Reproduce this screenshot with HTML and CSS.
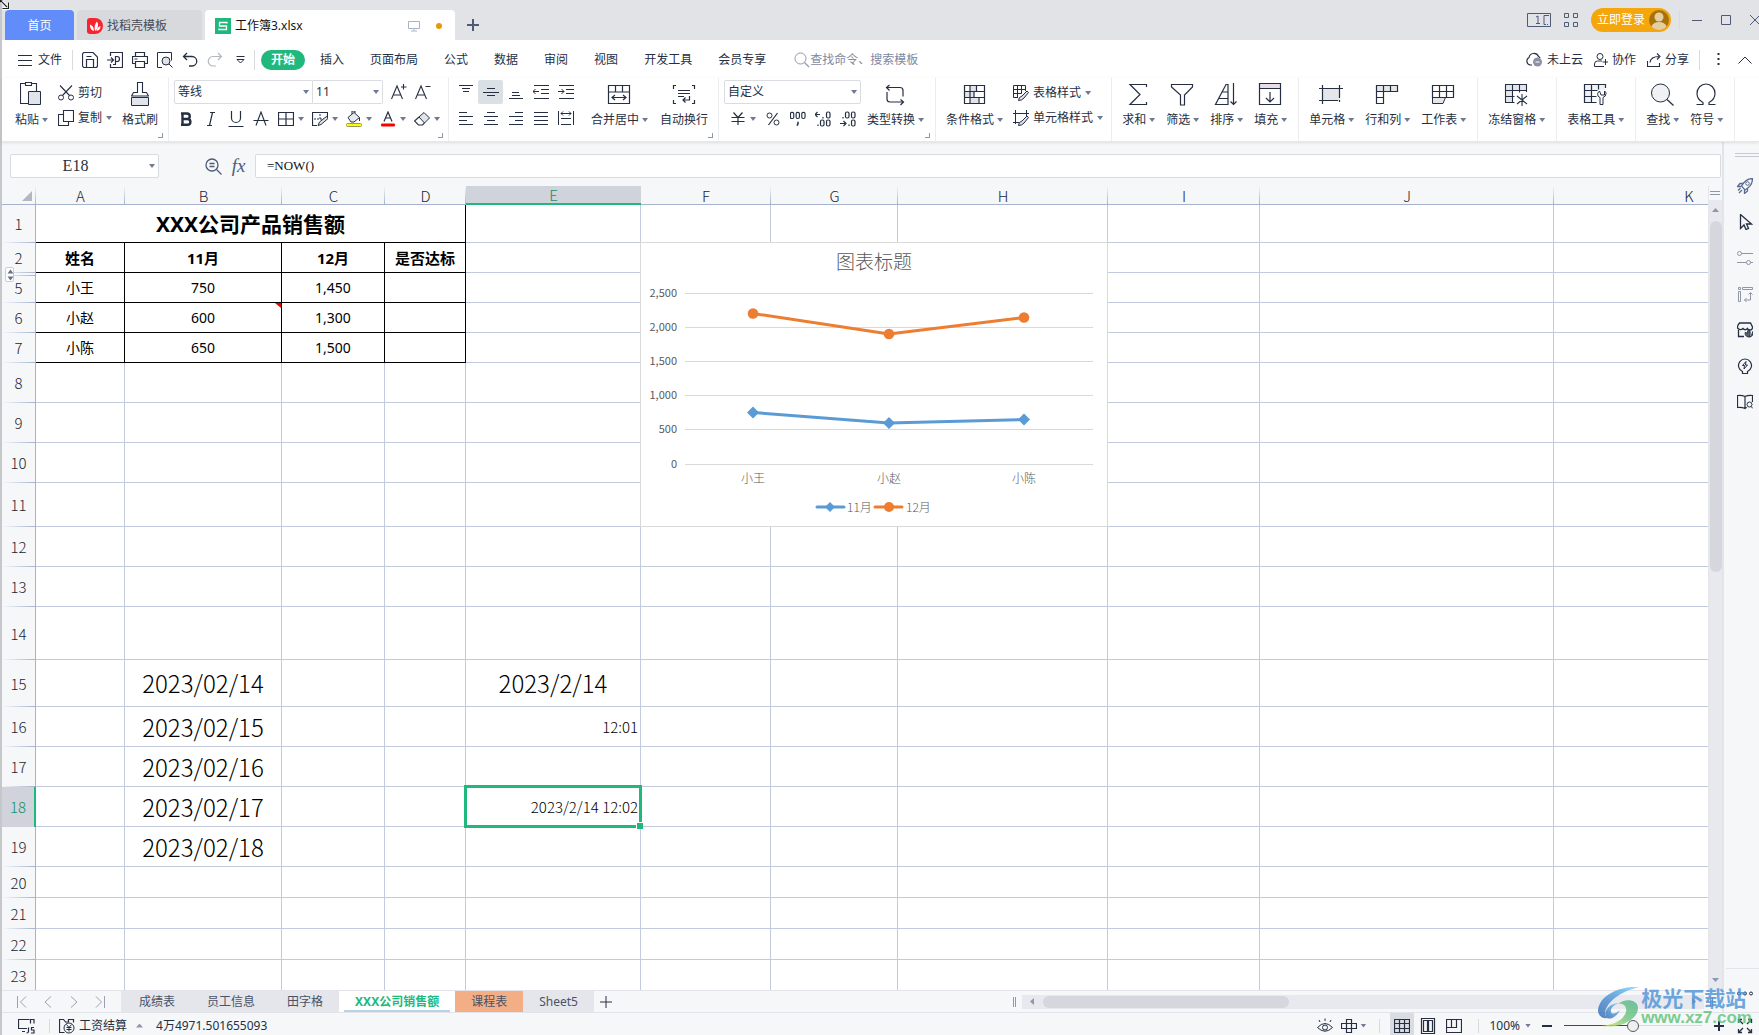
FILE: index.html
```html
<!DOCTYPE html>
<html lang="zh-CN">
<head>
<meta charset="utf-8">
<title>工作簿3.xlsx</title>
<link rel="stylesheet" href="styles.css">
</head>
<body>
<svg class="sprite" aria-hidden="true">
  <symbol id="save" viewBox="0 0 16 16"><path d="M.5 2.500a2 2 0 0 1 2-2H11l4.500 4.500v8.500a2 2 0 0 1-2 2h-11a2 2 0 0 1-2-2zM4.500 15V7.500H11.500V15M4.500 4.500H9.500" stroke-width="1.200"/></symbol>
  <symbol id="export" viewBox="0 0 16 16"><path d="M3.500 4V.5h12v15h-12V12M0 8h6M4 5.500 6.500 8 4 10.500M8.500 12.500V4.500h1.500a2.500 2.500 0 0 1 0 5H8.500M6 12.500h3" stroke-width="1.200"/></symbol>
  <symbol id="print" viewBox="0 0 16 16"><path d="M3.500 4.500V.5h9v4M3.500 11.500h-3v-7h15v7h-3M3.500 9.500h9v6h-9zM2.500 7h3" stroke-width="1.200"/></symbol>
  <symbol id="preview" viewBox="0 0 16 16"><path d="M5 15.500H.5V.5h14v8"/><circle cx="9" cy="9" r="4" fill="#dfe2e8"/><path d="m12 12 3.500 3.500"/></symbol>
  <symbol id="undo" viewBox="0 0 16 16"><path d="M5 1 1.500 4.500 5 8M2 4.500h8a4.500 4.500 0 0 1 0 9.500H7" stroke-width="1.300"/></symbol>
  <symbol id="redo" viewBox="0 0 16 16"><path d="M11 1l3.500 3.500L11 8M14 4.500H6A4.500 4.500 0 0 0 6 14h3" stroke-width="1.200"/></symbol>
  <symbol id="more" viewBox="0 0 9 9"><path d="M.5 1.500h8M1 4.500h7L4.500 8z"/></symbol>
  <symbol id="burger" viewBox="0 0 14 12"><path d="M0 1.500h14M0 6.500h14M0 11.500h14"/></symbol>
  <symbol id="search" viewBox="0 0 16 16"><circle cx="6.500" cy="6.500" r="5.500"/><path d="m10.500 10.500 4.500 4.500" stroke-width="1.300"/></symbol>
  <symbol id="monitor" viewBox="0 0 12 12"><path d="M.5 1.500h11v7H.5zM6 8.500v2M3 11h6"/></symbol>
  <symbol id="cloud" viewBox="0 0 17 15"><path d="M6 13H4.500A4 4 0 0 1 3 5.500 5 5 0 0 1 12.500 4.500 3 3 0 0 1 14 6" stroke-width="1.200"/><circle cx="11.500" cy="10" r="4.500" fill="#8a92a3" stroke="none"/><path d="M9.500 10h4" stroke="#fff"/></symbol>
  <symbol id="team" viewBox="0 0 14 14"><circle cx="6" cy="3.500" r="3"/><path d="M10 13.500H.5V11a3 3 0 0 1 3-3H8M11.500 6v6M8.500 9h6"/></symbol>
  <symbol id="share" viewBox="0 0 14 14"><path d="M.5 8v5.500h12V10M3 9.500C3.500 5.500 6 3.500 12 3.500M10 .5l3 3-3 3" stroke-width="1.100"/></symbol>
  <symbol id="dots" viewBox="0 0 3 14"><path d="M1.500 0v2M1.500 5v2M1.500 10v2" stroke-width="2"/></symbol>
  <symbol id="chev" viewBox="0 0 14 8"><path d="m.5 7.500 6.500-6.500 6.500 6.500"/></symbol>

  <symbol id="paste" viewBox="0 0 22 24"><path d="M8 21.500H.5v-20h5M12 1.500h4.500V9M5.500.5h6v3h-6z" stroke-width="1.100"/><path d="M8.500 9.500h12v13h-12z" fill="#e1e4ea"/></symbol>
  <symbol id="cut" viewBox="0 0 16 16"><circle cx="3" cy="12.500" r="2.500"/><circle cx="13" cy="12.500" r="2.500"/><path d="M2 .5 11.500 10.500M14 .5 4.500 10.500" stroke-width="1.100"/></symbol>
  <symbol id="copy" viewBox="0 0 16 16"><path d="M5.500.5h10v11h-10zM5.500 4.500H.5v11h10v-4" stroke-width="1.100"/></symbol>
  <symbol id="brush" viewBox="0 0 18 24"><path d="M6.500 10.500V.5h5v10h4l2 3.500H.5L2.500 10.500z" stroke-width="1.100"/><path d="M.5 15.500h17v8H.5z" fill="#e1e4ea"/></symbol>
  <symbol id="bold" viewBox="0 0 16 16"><path d="M3 2.500h6a2.700 2.700 0 0 1 0 5.500H4.500M4.500 8h5a2.900 2.900 0 0 1 0 5.800H3M4.500 2.500v11" stroke-width="2.400"/></symbol>
  <symbol id="italic" viewBox="0 0 16 16"><path d="M7 1.500h5M4 14.500h5M9.500 1.500l-3 13" stroke-width="1.200"/></symbol>
  <symbol id="under" viewBox="0 0 16 16"><path d="M3.500 0v7a4.500 4.500 0 0 0 9 0V0M.5 15.500h15" stroke-width="1.200"/></symbol>
  <symbol id="strike" viewBox="0 0 16 16"><path d="M3 14.500 8 1l5 13.500M.5 9.500h15" stroke-width="1.100"/></symbol>
  <symbol id="borders" viewBox="0 0 16 16"><path d="M.5 1.500h15v13H.5zM8 1.500v13M.5 8h15" stroke-width="1.200"/></symbol>
  <symbol id="cellfill" viewBox="0 0 16 16"><path d="M15.500 7V1.500H.5v13H5" stroke-width="1.200"/><path d="M8 3v6M2 8h10" stroke-dasharray="2 1"/><path d="M6 14.500 7.500 11l7-5.500 1.500 2-7 6z" fill="#e1e4ea"/></symbol>
  <symbol id="bucket" viewBox="0 0 16 16"><path d="M2 6.500 8 1.500l5.500 5L8 11H5z" fill="#e9ebef"/><path d="M6 3V0h3v2M13.500 6.500V10" /><rect x=".5" y="12.500" width="15" height="3" rx="1" fill="#ff0" stroke="#9a9a55"/></symbol>
  <symbol id="fontcolor" viewBox="0 0 16 16"><path d="M4 10.500 8 1l4 9.500M5.500 7h5" stroke-width="1.200"/><rect x="1" y="12.500" width="14" height="3" rx="1" fill="#f00" stroke="none"/></symbol>
  <symbol id="eraser" viewBox="0 0 16 16"><path d="m5 6 5-4.500 5.500 5.500-5 5z" fill="#e1e4ea"/><path d="M5 6 .5 10 4.500 14h4l2-2" stroke-width="1.100"/></symbol>
  <symbol id="aplus" viewBox="0 0 16 16"><path d="M.5 15 6 2l5.500 13M2.500 11h7M10 3h5.500M12.500 0v5.500" stroke-width="1.100"/></symbol>
  <symbol id="aminus" viewBox="0 0 16 16"><path d="M.5 15 6 2l5.500 13M2.500 11h7M10.500 2.500h5" stroke-width="1.100"/></symbol>

  <symbol id="vtop" viewBox="0 0 16 16"><path d="M1 1.500h14M4 4.500h8M5 7.500h6"/></symbol>
  <symbol id="vmid" viewBox="0 0 16 16"><path d="M4 4.500h8M0 8.500h16M4 11.500h8"/></symbol>
  <symbol id="vbot" viewBox="0 0 16 16"><path d="M4 8.500h7M4 11.500h8M1 14.500h14"/></symbol>
  <symbol id="outdent" viewBox="0 0 16 16"><path d="M1 1.500h15M8 5.500h8M8 9.500h8M1 14.500h15M0 7.500h6M2.500 5 0 7.500 2.500 10"/></symbol>
  <symbol id="indent" viewBox="0 0 16 16"><path d="M1 1.500h15M8 5.500h8M8 9.500h8M1 14.500h15M0 7.500h6M3.500 5 6 7.500 3.500 10"/></symbol>
  <symbol id="left" viewBox="0 0 16 16"><path d="M1 2.500h8M1 6.500h14M1 10.500h8M1 14.500h14"/></symbol>
  <symbol id="center" viewBox="0 0 16 16"><path d="M4 2.500h8M1 6.500h14M4 10.500h8M1 14.500h14"/></symbol>
  <symbol id="right" viewBox="0 0 16 16"><path d="M7 2.500h8M1 6.500h14M7 10.500h8M1 14.500h14"/></symbol>
  <symbol id="justify" viewBox="0 0 16 16"><path d="M1 2.500h14M1 6.500h14M1 10.500h14M1 14.500h14"/></symbol>
  <symbol id="distribute" viewBox="0 0 16 16"><path d="M.5 1v14M15.500 1v14M3 3.500h10M5 1.500l-2 2 2 2M11 1.500l2 2-2 2M3 8.500h10M3 14.500h10"/></symbol>
  <symbol id="merge" viewBox="0 0 24 24"><path d="M1.500 2.500h21v18h-21zM1.500 9h21M8.500 2.500V9M15.500 2.500V9M5 14.500h14M8 12l-3 2.500L8 17M16 12l3 2.500L16 17" stroke-width="1.200"/></symbol>
  <symbol id="wrap" viewBox="0 0 24 24"><path d="M4 2.500H1.500V6M20 2.500h2.500V6M1.500 17v3.500H4M22.500 17v3.500H20M6 7.500h12M6 10.500h12M6 13.500h6M17.500 13v4H11M13.500 14.500 11 17l2.500 2.500" stroke-width="1.200"/></symbol>
  <symbol id="yen" viewBox="0 0 16 16"><path d="M3.500 1.500 8 6.500l4.500-5M8 6.500V14M1.500 6.500h13M1.500 10.500h13" stroke-width="1.200"/></symbol>
  <symbol id="percent" viewBox="0 0 16 16"><circle cx="4.500" cy="4.500" r="2.500"/><circle cx="11.500" cy="11.500" r="2.500"/><path d="M12.500 2 3.500 14" stroke-width="1.200"/></symbol>
  <symbol id="thousand" viewBox="0 0 17 16"><g stroke-width="1.200"><rect x=".5" y="1" width="3.500" height="6.500" rx="1.500"/><rect x="6.500" y="1" width="3.500" height="6.500" rx="1.500"/><rect x="12.500" y="1" width="3.500" height="6.500" rx="1.500"/></g><path d="M8.500 11v2l-1 2" stroke-width="1.600"/></symbol>
  <symbol id="decinc" viewBox="0 0 16 16"><g stroke-width="1.200"><path d="M0 3.500h5M2.500 1 0 3.500 2.500 6M8 6v1.500M3 13.500V15"/><rect x="11.500" y="1" width="3.500" height="6" rx="1.500"/><rect x="5.500" y="9" width="3.500" height="6" rx="1.500"/><rect x="11.500" y="9" width="3.500" height="6" rx="1.500"/></g></symbol>
  <symbol id="decdec" viewBox="0 0 16 16"><g stroke-width="1.200"><path d="M0 12.500h6M3.500 10 6 12.500 3.500 15M3 6v1.500M9 13.500V15"/><rect x="5.500" y="1" width="3.500" height="6" rx="1.500"/><rect x="11.500" y="1" width="3.500" height="6" rx="1.500"/><rect x="11.500" y="9" width="3.500" height="6" rx="1.500"/></g></symbol>
  <symbol id="convert" viewBox="0 0 24 24"><path d="M6.500 2 3.500 4.500l3 3M3.500 4.500H17q3 0 3 3v6M4 9v7q0 3 3 3h13.500M17.500 16.500l3 2.500-3 3" stroke-width="1.200"/></symbol>

  <symbol id="cond" viewBox="0 0 24 24"><path d="M8 2.500h6v6H8zM2 8.500h10v6H2zM8 14.500h8v6H8z" fill="#e1e4ea" stroke="none"/><path d="M2.500 2.500h20v18h-20zM2.500 8.500h20M2.500 14.500h20M8 2.500v18M14.500 2.500v6M12 8.500v6M17 14.500v6" stroke-width="1.200"/></symbol>
  <symbol id="tstyle" viewBox="0 0 16 16"><path d="M5 12.500H.5V.5h12V6M.5 4.500h12M.5 8.500h8M4.500.5v12M8.500.5v8"/><path d="M5.500 15.500q0-3.500 3.500-4.500L14 6l1.500 1.500-4.500 5.500q-2 2.500-5.500 2.500z" fill="#dfe2e8"/></symbol>
  <symbol id="cstyle" viewBox="0 0 16 16"><path d="M0 3.500h16M2.500 0v14M0 12.500h6M13.500 0v6"/><path d="M5.500 15.500q0-3.500 3.500-4.500L14 6l1.500 1.500-4.500 5.500q-2 2.500-5.500 2.500z" fill="#dfe2e8"/></symbol>
  <symbol id="sum" viewBox="0 0 24 24"><path d="M20.500 4V1.500H4L14 11.500 4 21.500h16.500V19" stroke-width="1.200"/></symbol>
  <symbol id="filter" viewBox="0 0 24 24"><path d="M1.500 1.500h21V4L14.500 12v10h-4V12L1.500 4z" stroke-width="1.200"/></symbol>
  <symbol id="sort" viewBox="0 0 24 24"><path d="M14 21.500V1.500h-2L1.500 21.500zM8 9h6M5 15.500h9M19.500 0v21.500M16.500 18.500l3 3 3-3" stroke-width="1.200"/></symbol>
  <symbol id="fill" viewBox="0 0 24 24"><path d="M2 1h20v5H2z" fill="#e6e0e6" stroke="none"/><path d="M1.500.5h21v21h-21zM1.500 5.500h21M12 9v10M8 15l4 4 4-4" stroke-width="1.200"/></symbol>
  <symbol id="cells" viewBox="0 0 24 24"><path d="M4 5.500h17v12H4z" fill="#e4e6ea" stroke="none"/><path d="M0 5.500h24M0 17.500h19M3.500 2v19M20.500 2v13M20.500 17v2" stroke-width="1.200"/></symbol>
  <symbol id="rowcol" viewBox="0 0 24 24"><path d="M1.500 2.500h21v6h-21z" fill="#e4e6ea"/><path d="M1.500 2.500h21v6h-14v12h-7zM8.500 2.500v6M15.500 2.500v6M1.500 8.500v6h7" stroke-width="1.200"/></symbol>
  <symbol id="sheet" viewBox="0 0 24 24"><path d="M1.500 14.500v6H12l2.500-6" fill="#e4e6ea"/><path d="M1.500 2.500h21v12h-21zM1.500 8.500h21M8.500 2.500v12M15.500 2.500v12" stroke-width="1.200"/></symbol>
  <symbol id="freeze" viewBox="0 0 24 24"><path d="M1.500 1.500h21v6h-14v12h-7z" fill="#e4e6ea"/><path d="M22.500 9V1.500h-21v18h9M1.500 7.500h21M1.500 13.500h9M8.500 1.500v18M15.500 1.500v8M18 11v12M13 13l10 8M23 13l-10 8" stroke-width="1.100"/></symbol>
  <symbol id="tools" viewBox="0 0 24 24"><path d="M1.500 1.500h21v6h-14v12h-7z" fill="#f0f1f4" stroke="none"/><path d="M22.500 5V1.500h-21v18h12M1.500 7.500h13M1.500 13.500h12M8.500 1.500v18M15.500 1.500v5" stroke-width="1.200"/><path d="M16.500 8q-3 2-1.500 5 1 1 2 1.500v7h3v-7q3-1 3-4 0-1.500-1.500-2.500v4h-3.500z" fill="#fff"/></symbol>
  <symbol id="find" viewBox="0 0 24 24"><circle cx="10.500" cy="10" r="9" fill="#f0f1f3"/><path d="m17 16.500 6.500 6" stroke-width="1.300"/></symbol>
  <symbol id="omega" viewBox="0 0 24 24"><path d="M2.500 21.500H9v-2C5 17.500 3 14.500 3 10.500a9 9.500 0 0 1 18 0c0 4-2 7-6 9v2h6.500" stroke-width="1.200"/></symbol>

  <symbol id="zoomout" viewBox="0 0 17 17"><circle cx="7" cy="7" r="6" stroke-width="1.300"/><path d="M4.500 5.500h5M4.500 8.500h5M11.500 11.500l5 5" stroke-width="1.300"/></symbol>
  <symbol id="rocket" viewBox="0 0 16 16"><path d="M4.500 8Q8 1 15.500.5 15.500 8 8 12L4.500 8zM5.500 5.500H3L.5 8.500h3.500M10.500 10v3l-3 2.500V12M3.500 10 1 12.500M5 12l-3 3" stroke-width="1.300"/><circle cx="10.500" cy="5.500" r="1.800"/></symbol>
  <symbol id="cursor" viewBox="0 0 16 16"><path d="M3.500.5v14L7 11l2 4.500 2.500-1L9.500 10h5z" stroke-width="1.300"/></symbol>
  <symbol id="sliders" viewBox="0 0 16 16"><circle cx="2.500" cy="3.500" r="2"/><path d="M4.500 3.500H16M0 12.500h9.500M13.500 12.500H16"/><circle cx="11.500" cy="12.500" r="2"/></symbol>
  <symbol id="resize" viewBox="0 0 16 16"><path d="M1.500 1.500h2v2h-2zM5.500 1.500h10v2h-10zM1.500 5.500h2v10h-2zM13.500 7v7h-6M11.500 8.500l2-2 2 2M9.500 12l-2 2 2 2"/></symbol>
  <symbol id="store" viewBox="0 0 16 16"><path d="M2.500 1h11l2 4q0 3-2.500 3-2 0-2.500-1.500Q8 9 6 6.500 3 9 .5 6q0-3 2-5zM1.500 8v6.500H7" stroke-width="1.300"/><path d="M11.500 7c3 3 1 5 1 8-4 0-5-3-4-5l1.500 1.500zM15.500 9.500c1 3-.5 5.500-3 5.500" fill="#5a6273" /></symbol>
  <symbol id="bulb" viewBox="0 0 16 16"><path d="M5.500 13.500A6.500 6.500 0 1 1 10.500 13.500v2h-5z" stroke-width="1.200"/><path d="M9 3.500 5.500 7.500h2L7 11l3.500-4h-2z"/></symbol>
  <symbol id="book" viewBox="0 0 16 16"><path d="M8 2.500Q5 1 .5 1.500v12q4.500-.5 7.500 1 1-.8 2-1M8 2.500v12M8 2.500Q11 1 15.500 1.500V8" stroke-width="1.200"/><circle cx="12.500" cy="10.500" r="2.500"/><path d="m14 12.500 2 2"/></symbol>

  <symbol id="first" viewBox="0 0 10 12"><path d="M.5 0v12M9 .5 3.500 6 9 11.500"/></symbol>
  <symbol id="prev" viewBox="0 0 10 12"><path d="M8 .5 2 6l6 5.500"/></symbol>
  <symbol id="next" viewBox="0 0 10 12"><path d="m2 .5 6 5.500-6 5.500"/></symbol>
  <symbol id="last" viewBox="0 0 10 12"><path d="M9.500 0v12M1 .5 6.500 6 1 11.500"/></symbol>
  <symbol id="plus" viewBox="0 0 12 12"><path d="M6 0v12M0 6h12"/></symbol>
  <symbol id="macro" viewBox="0 0 17 16"><path d="M9 10.500H.5v-9h11M4 13.500h3M10.500 9.500v4q0 1.500-2 1.500M16 9.500h-2.500v2.500H16v3h-3M12.500 1v4.500M12.500 1.500h3.500v4" stroke-width="1.200"/></symbol>
  <symbol id="payroll" viewBox="0 0 16 16"><path d="M5.500 14.500H.5V1.500h4l2 2.500h3V1.500h5v3" stroke-width="1.200"/><circle cx="10" cy="10" r="5"/><path d="m7.500 6.500 2.500 3 2.500-3M10 9.500v4M7.500 9.500h5M7.500 11.500h5"/></symbol>
  <symbol id="eye" viewBox="0 0 16 16"><path d="M.5 9.500Q8 1.500 15.500 9.500 8 17 .5 9.500zM8 3V.5M3 4 2 2M13 4l1-2"/><circle cx="8" cy="9.500" r="2.500"/></symbol>
  <symbol id="cross" viewBox="0 0 16 16"><path d="M5.500 1.500h5v13h-5zM.5 5.500h15v5H.5z" stroke-width="1.200"/></symbol>
  <symbol id="vgrid" viewBox="0 0 16 16"><path d="M.5 1.500h15v13H.5zM.5 5.500h15M.5 10.500h15M5.500 1.500v13M10.500 1.500v13" stroke-width="1.200"/></symbol>
  <symbol id="vpage" viewBox="0 0 16 16"><path d="M1.500.5h13v15h-13zM3.500 2.500h4v11h-4zM8.500 2.500h4v11h-4z" stroke-width="1.200"/></symbol>
  <symbol id="vbreak" viewBox="0 0 16 16"><path d="M.5 1.500h15v13H.5zM.5 9.500h10V1.500M5.500 1.500v8" stroke-width="1.200"/></symbol>
  <symbol id="full" viewBox="0 0 16 16"><path d="M1.500 5V1.500H5M2 2l4 4M11 1.500h3.500V5M14 2l-4 4M1.500 11v3.500H5M2 14l4-4M14.500 11v3.500H11M14 14l-4-4" stroke-width="1.300"/></symbol>
</svg>

<header class="titlebar">
  <nav class="doctabs">
    <button class="doctab home">首页</button>
    <button class="doctab templates">
      <svg class="i16" viewBox="0 0 16 16"><path d="M3 0h5a8 8 0 0 1 0 16H3a3 3 0 0 1-3-3V3a3 3 0 0 1 3-3z" fill="#f5242f"/><path d="M7 13C3.500 12 3 9 3 6.500c2.500 1 4 3 4 6.500zM8 13c-1-4 0-7.500 2-9.500 2 3 1 7.500-2 9.500zM9.500 13c.5-2.500 1.500-4 4-5 0 2.500-1 4.500-4 5z" fill="#fff"/></svg>
      找稻壳模板</button>
    <button class="doctab current">
      <svg class="i16" viewBox="0 0 16 16"><rect width="16" height="16" fill="#1fb77c"/><path d="M12 5.500v-1H4.500v3.500h7v3.500H4v-1" fill="none" stroke="#fff" stroke-width="1.300"/></svg>
      <span class="grow">工作簿3.xlsx</span>
      <svg class="ico i12 pale"><use href="#monitor"/></svg><i class="unsaved"></i></button>
    <button class="newtab" aria-label="新建"><svg class="ico i12 heavy"><use href="#plus"/></svg></button>
  </nav>
  <div class="winctl">
    <button aria-label="窗口"><svg class="ico slate" width="24" height="14" viewBox="0 0 24 14"><path d="M.5.5h23v13H.5zM9 4l2-1v7M9 10.500h4M22 2.500h-5v9h2M20 11.500h1"/></svg></button>
    <button aria-label="应用"><svg class="ico slate" width="14" height="14" viewBox="0 0 14 14"><path d="M.5.5h4v4h-4zM9.500.5h4v4h-4zM.5 9.500h4v4h-4zM9.500 9.500h4v4h-4z"/></svg></button>
    <button class="login">立即登录<svg width="20" height="20" viewBox="0 0 20 20"><circle cx="10" cy="10" r="10" fill="#a87208"/><circle cx="10" cy="7" r="4.500" fill="#e3cfa3"/><path d="M2.500 16.500Q4 12 10 12t7.500 4.500A10 10 0 0 1 2.500 16.500z" fill="#e3cfa3"/></svg></button>
    <i class="rule"></i>
    <button aria-label="最小化"><svg class="ico slate" width="10" height="10" viewBox="0 0 10 10"><path d="M0 5.500h10"/></svg></button>
    <button aria-label="最大化"><svg class="ico slate" width="10" height="10" viewBox="0 0 10 10"><path d="M.5.500h9v9h-9z"/></svg></button>
    <button aria-label="关闭"><svg class="ico slate" width="10" height="10" viewBox="0 0 10 10"><path d="m0 0 10 10M10 0 0 10"/></svg></button>
  </div>
</header>

<div class="menubar">
  <button class="file"><svg class="ico" width="14" height="12"><use href="#burger"/></svg>文件</button>
  <i class="rule"></i>
  <div class="quick">
    <button aria-label="保存"><svg class="ico i16"><use href="#save"/></svg></button>
    <button aria-label="输出"><svg class="ico i16"><use href="#export"/></svg></button>
    <button aria-label="打印"><svg class="ico i16"><use href="#print"/></svg></button>
    <button aria-label="打印预览"><svg class="ico i16"><use href="#preview"/></svg></button>
    <button aria-label="撤销"><svg class="ico i16"><use href="#undo"/></svg></button>
    <button aria-label="恢复"><svg class="ico i16 off"><use href="#redo"/></svg></button>
    <button aria-label="更多"><svg class="ico" width="9" height="9"><use href="#more"/></svg></button>
  </div>
  <i class="rule"></i>
  <nav class="menus">
    <button class="on">开始</button><button>插入</button><button>页面布局</button><button>公式</button><button>数据</button><button>审阅</button><button>视图</button><button>开发工具</button><button>会员专享</button>
  </nav>
  <label class="cmd"><svg class="ico i16"><use href="#search"/></svg><input type="text" placeholder="查找命令、搜索模板" aria-label="查找命令"></label>
  <div class="cloudbar">
    <button><svg class="ico" width="17" height="15"><use href="#cloud"/></svg>未上云</button>
    <button><svg class="ico i14"><use href="#team"/></svg>协作</button>
    <button><svg class="ico i14"><use href="#share"/></svg>分享</button>
    <i class="rule"></i>
    <button class="slim" aria-label="更多"><svg class="ico" width="3" height="14"><use href="#dots"/></svg></button>
    <button class="slim" aria-label="收起功能区"><svg class="ico" width="14" height="8"><use href="#chev"/></svg></button>
  </div>
</div>

<div class="ribbon">
  <section class="group clip">
    <button class="big"><svg class="ico" width="22" height="24"><use href="#paste"/></svg><span class="dd">粘贴</span></button>
    <div class="stack">
      <button><svg class="ico i16"><use href="#cut"/></svg><span>剪切</span></button>
      <button><svg class="ico i16"><use href="#copy"/></svg><span class="dd wide">复制</span></button>
    </div>
    <button class="big"><svg class="ico" width="18" height="24"><use href="#brush"/></svg><span>格式刷</span></button>
    <i class="launch"></i>
  </section>
  <section class="group font">
    <div class="stack">
      <div class="line">
        <label class="pick name"><select aria-label="字体"><option>等线</option></select></label><label class="pick size"><select aria-label="字号"><option>11</option></select></label>
        <button class="grown" aria-label="增大字号"><svg class="ico i16"><use href="#aplus"/></svg></button>
        <button aria-label="减小字号"><svg class="ico i16"><use href="#aminus"/></svg></button>
      </div>
      <div class="line tools">
        <button aria-label="加粗"><svg class="ico i16"><use href="#bold"/></svg></button>
        <button aria-label="倾斜"><svg class="ico i16"><use href="#italic"/></svg></button>
        <button aria-label="下划线"><svg class="ico i16"><use href="#under"/></svg></button>
        <button aria-label="删除线"><svg class="ico i16"><use href="#strike"/></svg></button>
        <button class="dd" aria-label="边框"><svg class="ico i16"><use href="#borders"/></svg></button>
        <button class="dd" aria-label="单元格样式"><svg class="ico i16"><use href="#cellfill"/></svg></button>
        <button class="dd" aria-label="填充颜色"><svg class="ico i16"><use href="#bucket"/></svg></button>
        <button class="dd" aria-label="字体颜色"><svg class="ico i16"><use href="#fontcolor"/></svg></button>
        <button class="dd" aria-label="清除"><svg class="ico i16"><use href="#eraser"/></svg></button>
      </div>
    </div>
    <i class="launch"></i>
  </section>
  <section class="group align">
    <div class="alignset">
      <button aria-label="顶端对齐"><svg class="ico i16"><use href="#vtop"/></svg></button>
      <button class="on" aria-label="垂直居中"><svg class="ico i16"><use href="#vmid"/></svg></button>
      <button aria-label="底端对齐"><svg class="ico i16"><use href="#vbot"/></svg></button>
      <button aria-label="减少缩进"><svg class="ico i16"><use href="#outdent"/></svg></button>
      <button aria-label="增加缩进"><svg class="ico i16"><use href="#indent"/></svg></button>
      <button aria-label="左对齐"><svg class="ico i16"><use href="#left"/></svg></button>
      <button aria-label="水平居中"><svg class="ico i16"><use href="#center"/></svg></button>
      <button aria-label="右对齐"><svg class="ico i16"><use href="#right"/></svg></button>
      <button aria-label="两端对齐"><svg class="ico i16"><use href="#justify"/></svg></button>
      <button aria-label="分散对齐"><svg class="ico i16"><use href="#distribute"/></svg></button>
    </div>
    <button class="big"><svg class="ico i24"><use href="#merge"/></svg><span class="dd">合并居中</span></button>
    <button class="big"><svg class="ico i24"><use href="#wrap"/></svg><span>自动换行</span></button>
    <i class="launch"></i>
  </section>
  <section class="group number">
    <div class="stack">
      <label class="pick format"><select aria-label="数字格式"><option>自定义</option></select></label>
      <div class="line numtools">
        <button class="dd" aria-label="货币"><svg class="ico i16"><use href="#yen"/></svg></button>
        <button aria-label="百分比"><svg class="ico i16"><use href="#percent"/></svg></button>
        <button aria-label="千位分隔"><svg class="ico i16"><use href="#thousand"/></svg></button>
        <button aria-label="增加小数位"><svg class="ico i16"><use href="#decinc"/></svg></button>
        <button aria-label="减少小数位"><svg class="ico i16"><use href="#decdec"/></svg></button>
      </div>
    </div>
    <button class="big"><svg class="ico i24"><use href="#convert"/></svg><span class="dd">类型转换</span></button>
    <i class="launch"></i>
  </section>
  <section class="group styles">
    <button class="big"><svg class="ico i24"><use href="#cond"/></svg><span class="dd">条件格式</span></button>
    <div class="stack">
      <button><svg class="ico i16"><use href="#tstyle"/></svg><span class="dd wide">表格样式</span></button>
      <button><svg class="ico i16"><use href="#cstyle"/></svg><span class="dd wide">单元格样式</span></button>
    </div>
  </section>
  <section class="group">
    <button class="big"><svg class="ico i24"><use href="#sum"/></svg><span class="dd">求和</span></button>
    <button class="big"><svg class="ico i24"><use href="#filter"/></svg><span class="dd">筛选</span></button>
    <button class="big"><svg class="ico i24"><use href="#sort"/></svg><span class="dd">排序</span></button>
    <button class="big"><svg class="ico i24"><use href="#fill"/></svg><span class="dd">填充</span></button>
  </section>
  <section class="group">
    <button class="big"><svg class="ico i24"><use href="#cells"/></svg><span class="dd">单元格</span></button>
    <button class="big"><svg class="ico i24"><use href="#rowcol"/></svg><span class="dd">行和列</span></button>
    <button class="big"><svg class="ico i24"><use href="#sheet"/></svg><span class="dd">工作表</span></button>
  </section>
  <section class="group"><button class="big"><svg class="ico i24"><use href="#freeze"/></svg><span class="dd">冻结窗格</span></button></section>
  <section class="group"><button class="big"><svg class="ico i24"><use href="#tools"/></svg><span class="dd">表格工具</span></button></section>
  <section class="group">
    <button class="big"><svg class="ico i24"><use href="#find"/></svg><span class="dd">查找</span></button>
    <button class="big"><svg class="ico i24"><use href="#omega"/></svg><span class="dd">符号</span></button>
  </section>
</div>

<div class="body">
  <main class="work">
    <div class="formula">
      <label class="pick cellref"><input type="text" value="E18" aria-label="名称框"></label>
      <button class="lens" aria-label="缩小"><svg class="ico slate" width="17" height="17"><use href="#zoomout"/></svg></button>
      <button class="fx" aria-label="插入函数">fx</button>
      <input class="entry" type="text" value="=NOW()" aria-label="编辑栏">
    </div>
    <div class="sheetarea">
      <div class="grid">
        <table>
          <colgroup><col class="c0"><col class="ca"><col class="cb"><col class="cc"><col class="cd"><col class="ce"><col class="cf"><col class="cg"><col class="ch"><col class="ci"><col class="cj"><col class="ck"></colgroup>
          <thead><tr><th class="corner"><th>A<th>B<th>C<th>D<th class="sel">E<th>F<th>G<th>H<th>I<th>J<th>K</thead>
          <tbody>
          <tr class="r1"><th>1<td class="title k" colspan="4">XXX公司产品销售额<td><td><td><td><td><td><td>
          <tr class="r2 bold"><th>2<i class="hidden-rows"><svg width="9" height="14" viewBox="0 0 9 14"><path d="M1.500 5.500h6l-3-4zM1.500 8.500h6l-3 4z" fill="#66708a"/></svg></i><td class="k">姓名<td class="k">11月<td class="k">12月<td class="k">是否达标<td><td><td><td><td><td><td>
          <tr class="r2 after"><th>5<td class="k">小王<td class="k">750<td class="k">1,450<td class="k"><td><td><td><td><td><td><td>
          <tr class="r2"><th>6<td class="k">小赵<td class="k note">600<td class="k">1,300<td class="k"><td><td><td><td><td><td><td>
          <tr class="r2"><th>7<td class="k">小陈<td class="k">650<td class="k">1,500<td class="k"><td><td><td><td><td><td><td>
          <tr class="r8"><th>8<td><td><td><td><td><td><td><td><td><td><td>
          <tr class="r8"><th>9<td><td><td><td><td><td><td><td><td><td><td>
          <tr class="r8"><th>10<td><td><td><td><td><td><td><td><td><td><td>
          <tr class="r11"><th>11<td><td><td><td><td><td><td><td><td><td><td>
          <tr class="r8"><th>12<td><td><td><td><td><td><td><td><td><td><td>
          <tr class="r8"><th>13<td><td><td><td><td><td><td><td><td><td><td>
          <tr class="r14"><th>14<td><td><td><td><td><td><td><td><td><td><td>
          <tr class="r15"><th>15<td><td class="date">2023/02/14<td><td><td class="date">2023/2/14<td><td><td><td><td><td>
          <tr class="r8"><th>16<td><td class="date">2023/02/15<td><td><td class="time">12:01<td><td><td><td><td><td>
          <tr class="r8"><th>17<td><td class="date">2023/02/16<td><td><td><td><td><td><td><td><td>
          <tr class="r8"><th class="sel">18<td><td class="date">2023/02/17<td><td><td class="time active">2023/2/14 12:02<td><td><td><td><td><td>
          <tr class="r8"><th>19<td><td class="date">2023/02/18<td><td><td><td><td><td><td><td><td>
          <tr class="r20"><th>20<td><td><td><td><td><td><td><td><td><td><td>
          <tr class="r20"><th>21<td><td><td><td><td><td><td><td><td><td><td>
          <tr class="r20"><th>22<td><td><td><td><td><td><td><td><td><td><td>
          <tr class="r20"><th>23<td><td><td><td><td><td><td><td><td><td><td>
          </tbody>
        </table>
        <figure class="chart">
          <svg width="466" height="283" viewBox="1 1 466 283">
            <path d="M45 51.500h408M45 85.500h408M45 119.500h408M45 153.500h408M45 187.500h408M45 222.500h408" stroke="#d9d9d9"/>
            <text class="ctitle" x="234" y="27" text-anchor="middle">图表标题</text>
            <g text-anchor="end"><text x="37" y="55">2,500</text><text x="37" y="89">2,000</text><text x="37" y="123">1,500</text><text x="37" y="157">1,000</text><text x="37" y="191">500</text><text x="37" y="226">0</text></g>
            <g class="cat" text-anchor="middle"><text x="113" y="241">小王</text><text x="249" y="241">小赵</text><text x="384" y="241">小陈</text></g>
            <g fill="none" stroke-width="3" stroke-linejoin="round" stroke-linecap="round"><path d="M113 71.500 249 92 384 75.500M235 265h27" stroke="#ed7d31"/><path d="M113 170.500 249 181 384 177.500M177 265h27" stroke="#5b9bd5"/></g>
            <g fill="#ed7d31"><circle cx="113" cy="71.500" r="5.300"/><circle cx="249" cy="92" r="5.300"/><circle cx="384" cy="75.500" r="5.300"/><circle cx="249" cy="265" r="5"/></g>
            <path d="M113 164.500l6 6-6 6-6-6zM249 175l6 6-6 6-6-6zM384 171.500l6 6-6 6-6-6zM190 260l5 5-5 5-5-5z" fill="#5b9bd5"/>
            <g class="cat"><text x="207" y="270">11月</text><text x="266" y="270">12月</text></g>
          </svg>
        </figure>
      </div>
      <div class="vscroll"><i class="split"></i><i class="tri up"></i><i class="thumb"></i><i class="tri down"></i></div>
    </div>
    <div class="sheetbar">
      <div class="sheetnav">
        <button aria-label="第一张"><svg class="ico" width="10" height="12"><use href="#first"/></svg></button>
        <button aria-label="上一张"><svg class="ico" width="10" height="12"><use href="#prev"/></svg></button>
        <button aria-label="下一张"><svg class="ico" width="10" height="12"><use href="#next"/></svg></button>
        <button aria-label="最后一张"><svg class="ico" width="10" height="12"><use href="#last"/></svg></button>
      </div>
      <nav class="sheets"><button>成绩表</button><button>员工信息</button><button>田字格</button><button class="on">XXX公司销售额</button><button class="orange">课程表</button><button>Sheet5</button></nav>
      <button class="addsheet" aria-label="新建工作表"><svg class="ico i12"><use href="#plus"/></svg></button>
      <div class="hscroll"><i class="grip"></i><div class="track"><i class="tri lt"></i><i class="thumb"></i><i class="tri rt"></i></div><i class="grip"></i></div>
    </div>
  </main>
  <aside class="side">
    <i class="handle"></i>
    <button class="blue" aria-label="助手"><svg class="ico i16"><use href="#rocket"/></svg></button>
    <button aria-label="选择"><svg class="ico i16"><use href="#cursor"/></svg></button>
    <button class="dim" aria-label="属性"><svg class="ico i16"><use href="#sliders"/></svg></button>
    <button class="dim" aria-label="布局"><svg class="ico i16"><use href="#resize"/></svg></button>
    <button aria-label="素材"><svg class="ico i16"><use href="#store"/></svg></button>
    <button aria-label="灵感"><svg class="ico i16"><use href="#bulb"/></svg></button>
    <button aria-label="查阅"><svg class="ico i16"><use href="#book"/></svg></button>
    <div class="sidemore"><svg class="ico" width="16" height="5" viewBox="0 0 16 5"><circle cx="2" cy="2.500" r="1.500"/><circle cx="8" cy="2.500" r="1.500"/><circle cx="14" cy="2.500" r="1.500"/></svg></div>
  </aside>
</div>

<footer class="status">
  <button aria-label="宏"><svg class="ico" width="17" height="16"><use href="#macro"/></svg></button>
  <i class="rule"></i>
  <button class="pay"><svg class="ico i16"><use href="#payroll"/></svg>工资结算<i class="tri up"></i></button>
  <span class="value">4万4971.501655093</span>
  <div class="views">
    <button aria-label="护眼"><svg class="ico i16"><use href="#eye"/></svg></button>
    <button class="dd" aria-label="阅读模式"><svg class="ico i16"><use href="#cross"/></svg></button>
    <i class="rule"></i>
    <button class="view on" aria-label="普通视图"><svg class="ico i16"><use href="#vgrid"/></svg></button>
    <button class="view" aria-label="页面布局"><svg class="ico i16"><use href="#vpage"/></svg></button>
    <button class="view" aria-label="分页预览"><svg class="ico i16"><use href="#vbreak"/></svg></button>
    <i class="rule"></i>
    <button class="dd pct">100%</button>
    <button class="minus" aria-label="缩小"><svg class="ico" width="10" height="10" viewBox="0 0 10 10"><path d="M0 5h10" stroke-width="2"/></svg></button>
    <input class="zoom" type="range" min="0" max="100" value="50" aria-label="缩放">
    <button aria-label="放大"><svg class="ico" width="10" height="10" viewBox="0 0 10 10"><path d="M0 5h10M5 0v10" stroke-width="2"/></svg></button>
    <button class="fullscreen" aria-label="全屏"><svg class="ico i16"><use href="#full"/></svg></button>
  </div>
</footer>

<div class="watermark">
  <svg width="44" height="42" viewBox="0 0 44 42">
    <defs><linearGradient id="wb" x1="0" y1="1" x2="1" y2="0"><stop offset="0" stop-color="#2f66b0"/><stop offset=".6" stop-color="#4f9fe0"/><stop offset="1" stop-color="#7fd6f5"/></linearGradient><linearGradient id="wg" x1="0" y1="1" x2="1" y2="0"><stop offset="0" stop-color="#e6ea62"/><stop offset=".5" stop-color="#6fc47c"/><stop offset="1" stop-color="#4db58a"/></linearGradient></defs>
    <path d="M42 1C24 0 3 8 1 24c0 6 5 9 9 8C4 26 13 8 42 1z" fill="url(#wb)"/>
    <path d="M22 17c-9 0-16 8-13 14 3 4 11 0 14-7-3 3-8 5-9 2-1-4 3-7 8-9z" fill="url(#wb)"/>
    <path d="M4 40c14-1 23-7 25-14 1-5-2-9-8-8 6-6 20-5 20 4C41 34 22 43 4 40z" fill="url(#wg)"/>
  </svg>
  <div><b>极光下载站</b><span>www.xz7.com</span></div>
</div>
<svg class="pointer" width="10" height="10" viewBox="0 0 10 10"><path d="M0 0l7 7M8.500 2.500v6h-6" fill="none" stroke="#fff" stroke-width="3"/><path d="M0 0l7 7M8.500 2.500v6h-6M0 2.500V0h2.500" fill="none" stroke="#222" stroke-width="1.200"/></svg>
</body>
</html>
```

FILE: styles.css
```css
:root {
  --ink: #262f42;
  --slate: #4d5b78;
  --rule: #dfe1e6;
  --panel: #f5f7f9;
  --green: #1fb97d;
  --gridline: #c3cadd;
  --headline: #a6b3cf;
  --arrow: #6f7a92;
}
* { box-sizing: border-box; }
body {
  margin: 0;
  height: 100vh;
  padding-left: 2px;
  display: flex;
  flex-direction: column;
  overflow: hidden;
  position: relative;
  background: #c6c7ca;
  color: var(--ink);
  font: 12px/16px "Noto Sans", "Noto Sans CJK SC", sans-serif;
}
button, input, select { font: inherit; color: inherit; border: 0; padding: 0; margin: 0; background: none; outline: none; }
button { display: flex; align-items: center; white-space: nowrap; }
svg { display: block; flex: none; }
i { font-style: normal; }
.sprite { display: none; }
.ico { fill: none; stroke: currentColor; }
.i12 { width: 12px; height: 12px; }
.i14 { width: 14px; height: 14px; }
.i16 { width: 16px; height: 16px; }
.i24 { width: 24px; height: 24px; }
.slate { color: var(--slate); }
.pale { color: #a9b2c8; }
.off { color: #b3b7c0; }
.grow { flex: 1; text-align: left; }
.rule { width: 1px; height: 20px; background: #d8dade; }
.dd { display: flex; align-items: center; gap: 3px; }
.dd::after, .pick::after {
  content: "";
  width: 6px;
  height: 4px;
  margin-right: -1px;
  background: var(--arrow);
  clip-path: polygon(0 0, 100% 0, 50% 100%);
}
.dd.wide { gap: 4px; }
.tri { width: 7px; height: 4px; background: #8d97ae; }
.tri.up { clip-path: polygon(50% 0, 100% 100%, 0 100%); }
.tri.down { clip-path: polygon(0 0, 100% 0, 50% 100%); }
.tri.lt { width: 4px; height: 7px; clip-path: polygon(0 50%, 100% 0, 100% 100%); }
.tri.rt { width: 4px; height: 7px; clip-path: polygon(100% 50%, 0 0, 0 100%); }

/* title bar */
.titlebar { flex: none; height: 40px; display: flex; justify-content: space-between; background: #e2e3e7; overflow: hidden; }
.doctabs { display: flex; align-items: flex-end; gap: 3px; padding-left: 3px; }
.doctab { height: 30px; border-radius: 4px 4px 0 0; padding: 2px 10px 0; gap: 4px; }
.home { width: 69px; justify-content: center; background: #608dfa; color: #fff; }
.templates { width: 125px; background: #d8d9dd; color: #454b58; }
.current { width: 250px; background: #fff; color: #111; padding-right: 5px; }
.unsaved { width: 6px; height: 6px; border-radius: 50%; background: #e69a0a; margin: 0 8px 0 12px; }
.newtab { height: 30px; padding: 0 9px; color: var(--slate); }
.heavy { stroke-width: 2; }
.winctl { height: 40px; display: flex; align-items: center; gap: 13px; margin-right: -1px; }
.login { height: 24px; padding: 0 2px 0 6px; gap: 4px; border-radius: 12px; background: #f4a60c; color: #fff; }
.winctl .rule { margin-left: -5px; }
.winctl .rule + button { margin-right: 6px; margin-left: -1px; }
.winctl button:last-child { margin-left: 6px; }

/* menu bar */
.menubar { flex: none; height: 38px; padding-top: 1px; display: flex; align-items: center; background: #fff; }
.file { padding: 0 10px 0 16px; gap: 6px; }
.quick { display: flex; align-items: center; gap: 9px; padding: 0 9px; }
.quick button:last-child { margin-left: 4px; }
.menus { display: flex; align-items: center; gap: 26px; padding-left: 6px; }
.menus .on { height: 20px; padding: 0 10px; margin-right: -11px; border-radius: 10px; background: var(--green); color: #fff; font-weight: 700; }
.cmd { display: flex; align-items: center; flex: 1; padding-left: 28px; color: #8d97ae; }
.cmd input { flex: 1; min-width: 0; }
.cmd input::placeholder { color: #7d88a3; opacity: 1; }
.cloudbar { display: flex; align-items: center; gap: 11px; padding-right: 7px; }
.cloudbar button { gap: 4px; }
.cloudbar .rule { margin: 0 -1px; }
.cloudbar .slim { padding-left: 7px; }

/* ribbon */
.ribbon { flex: none; height: 64px; display: flex; background: #fff; border-bottom: 1px solid #e6e7ea; box-shadow: 0 1px 3px #0000001a; position: relative; z-index: 1; }
.group { position: relative; display: flex; gap: 12px; padding: 4px 12px 0 10px; border-right: 1px solid #ecedf0; }
.clip { padding: 4px 10px 0 13px; gap: 11px; }
.font { padding: 2px 5px 0; width: 280px; }
.align { padding: 2px 10px 0 4px; gap: 13px; }
.number { padding: 2px 12px 0 5px; gap: 6px; }
.styles { padding-right: 9px; gap: 11px; }
.big { flex-direction: column; gap: 6px; align-items: center; height: 48px; justify-content: flex-start; }
.align ~ .group .big { padding-top: 1px; gap: 5px; }
.align .big, .number .big { padding-top: 3px; gap: 5px; height: 50px; }
.align ~ .number .big { padding-top: 3px; }
.stack { display: flex; flex-direction: column; gap: 9px; align-items: flex-start; }
.clip .stack, .styles .stack { padding-top: 3px; }
.stack > button { gap: 4px; height: 16px; }
.launch { position: absolute; right: 5px; bottom: 3px; width: 5px; height: 5px; border: solid #8d97ae; border-width: 0 1px 1px 0; }
.line { display: flex; align-items: center; }
.font .stack, .number .stack { gap: 3px; }
.line > button { height: 24px; }
.pick { display: flex; align-items: center; height: 24px; border: 1px solid #d9dce1; border-radius: 2px; background: #fff; padding-right: 4px; }
.pick select { appearance: none; flex: 1; min-width: 0; padding-left: 3px; }
.pick.name { width: 139px; border-radius: 2px 0 0 2px; }
.pick.size { width: 70px; border-left: 0; border-radius: 0 2px 2px 0; }
.pick.format { width: 137px; }
.grown { margin: 0 8px; }
.tools { gap: 9px; padding-left: 4px; }
.tools .dd { gap: 4px; }
.tools .dd::after, .numtools .dd::after { margin-right: -1px; }
.numtools { gap: 9px; padding-left: 6px; }
.numtools .dd { gap: 4px; margin-right: 1px; }
.alignset { display: grid; grid-template-columns: repeat(5, 25px); grid-auto-rows: 24px; row-gap: 2px; align-content: start; }
.alignset button { justify-content: center; }
.alignset .on { background: #dbe0e5; border-radius: 2px; }

/* workspace */
.body { flex: 1; min-height: 0; display: flex; background: var(--panel); }
.work { flex: 1; min-width: 0; display: flex; flex-direction: column; }
.formula { flex: none; height: 44px; display: flex; align-items: center; padding: 4px 1px 0 8px; }
.cellref { width: 149px; border-color: #d8dbe0; font: 16px/20px "Liberation Serif", serif; }
.cellref input { flex: 1; min-width: 0; text-align: center; padding-right: 9px; }
.lens { margin-left: 46px; }
.fx { width: 33px; justify-content: center; font: italic 19px/20px "Liberation Serif", serif; color: var(--slate); }
.entry { flex: 1; height: 24px; border: 1px solid #d8dbe0; border-radius: 2px; background: #fff; padding-left: 11px; color: #111; font: 13px/20px "Liberation Serif", serif; }
.sheetarea { flex: 1; min-height: 0; display: flex; }
.grid { flex: 1; min-width: 0; overflow: hidden; position: relative; background: #fff; font-family: "Noto Sans CJK SC", sans-serif; }
table { table-layout: fixed; width: 1822px; border-spacing: 0; }
.c0 { width: 34px; } .ca { width: 89px; } .cb { width: 157px; } .cc { width: 103px; } .cd { width: 81px; } .ce { width: 175px; }
.cf { width: 130px; } .cg { width: 127px; } .ch { width: 210px; } .ci { width: 152px; } .cj { width: 294px; } .ck { width: 270px; }
th, td { padding: 0; white-space: nowrap; }
th { position: relative; font-size: 15px; font-weight: 300; line-height: 18px; text-align: center; background-color: var(--panel); background-repeat: no-repeat; color: #1d2433; }
thead th { height: 19px; padding-top: 1px; line-height: 17px; border-bottom: 1px solid var(--headline); background-image: linear-gradient(transparent, var(--headline)); background-size: 1px 100%; background-position: right; }
thead .sel { background: #d0d3db; color: #14906a; border-bottom: 2px solid var(--green); line-height: 16px; }
.corner::after { content: ""; position: absolute; right: 4px; bottom: 3px; width: 10px; height: 10px; background: #b4b7bd; clip-path: polygon(100% 0, 100% 100%, 0 100%); }
tbody th { border-right: 1px solid var(--headline); background-image: linear-gradient(to right, transparent, var(--headline)); background-size: 100% 1px; background-position: bottom; }
tbody th.sel { background: #d0d3db; color: #14906a; border-right: 2px solid var(--green); }
td { border: solid var(--gridline); border-width: 0 1px 1px 0; color: #000; font: 14px/18px "Noto Sans", "Noto Sans CJK SC", sans-serif; text-align: center; }
td.k { border-color: #000; }
.bold td { font-size: 15px; font-weight: 700; }
td.title { font-size: 21px; line-height: 30px; font-weight: 700; }
td.date { font: 300 24px/30px "Noto Sans CJK SC", sans-serif; }
td.time { font: 300 15px/18px "Noto Sans CJK SC", sans-serif; text-align: right; padding-right: 2px; }
.r1 { height: 38px; } .r2 { height: 30px; } .r8 { height: 40px; } .r11 { height: 44px; } .r14 { height: 53px; } .r15 { height: 47px; } .r20 { height: 31px; }
.after th { background-image: linear-gradient(to right, transparent, var(--headline)), linear-gradient(to right, transparent, var(--headline)); background-position: bottom, 0 2px; }
.bold th { z-index: 1; }
.hidden-rows { position: absolute; left: 3px; bottom: -9px; width: 9px; height: 15px; border: 1px solid #c9cdd6; border-radius: 2px; background: #fff; display: grid; place-items: center; }
td.note { position: relative; }
.note::after { content: ""; position: absolute; right: 0; top: 0; width: 6px; height: 5px; background: #e00; clip-path: polygon(0 0, 100% 0, 100% 100%); }
td.active { position: relative; }
.active::before { content: ""; position: absolute; inset: -2px; border: 3px solid var(--green); }
.active::after { content: ""; position: absolute; right: -3px; bottom: -3px; width: 6px; height: 6px; background: var(--green); box-shadow: -1px -1px #fff; }
.chart { position: absolute; left: 638px; top: 56px; margin: 0; border: 1px solid #d9d9d9; background: #fff; }
.chart text { fill: #595959; font: 11px "Noto Sans CJK SC", sans-serif; }
.chart .cat text { font-size: 12px; font-weight: 300; }
.chart .ctitle { font-size: 19px; font-weight: 300; }

.vscroll { width: 14px; border-left: 1px solid #e4e6ea; background: #e8e9ee; display: flex; flex-direction: column; align-items: center; padding-bottom: 8px; }
.split { align-self: stretch; height: 14px; background: linear-gradient(#8d97ae, #8d97ae) 1px 5px / 10px 1px no-repeat, linear-gradient(#8d97ae, #8d97ae) 1px 8px / 10px 1px no-repeat, var(--panel); }
.vscroll .up { margin: 8px 0 9px; }
.vscroll .thumb { width: 12px; flex: 0 1 351px; border-radius: 6px; background: #d4d7de; }
.vscroll .down { margin-top: auto; }

/* sheet bar */
.sheetbar { flex: none; height: 22px; display: flex; border-top: 1px solid #e2e4e9; }
.sheetnav { display: flex; padding: 0 15px; gap: 16px; width: 119px; color: #9aa1b0; }
.sheets { display: flex; color: #4a5266; }
.sheets button { padding: 1px 16px 0; background: #e4e6ec; }
.sheets button:first-child { padding-left: 18px; }
.sheets .on { background: linear-gradient(#b7d3ea, #b7d3ea) center bottom / 106px 2px no-repeat #fff; color: var(--green); font-weight: 700; }
.sheets .orange { background: #f4ae85; }
.addsheet { padding: 0 6px; }
.hscroll { display: flex; align-items: center; gap: 6px; margin-left: auto; width: 709px; padding-right: 9px; }
.grip { width: 3px; height: 10px; border: solid #8d97ae; border-width: 0 1px; }
.track { flex: 1; height: 14px; display: flex; align-items: center; padding: 0 8px; background: #e8e9ee; }
.track .thumb { width: 246px; height: 12px; margin-left: 9px; border-radius: 6px; background: #d4d7de; }
.track .rt { margin-left: auto; }

/* side pane */
.side { width: 37px; border-left: 2px solid #e2e4ea; display: flex; flex-direction: column; padding: 11px 0 0 11px; gap: 20px; }
.handle { height: 4px; margin-bottom: 1px; border: solid #c5c9d1; border-width: 1px 0; }
.side button { margin-left: 2px; }
.blue { color: #5a6b92; }
.dim { color: #8f96a6; }
.sidemore { margin: auto 0 0 -9px; border-top: 1px solid #e2e4ea; padding: 22px 0 16px 11px; }

/* status bar */
.status { flex: none; height: 23px; display: flex; align-items: flex-end; background: var(--panel); border-top: 1px solid #e2e4e9; padding: 0 6px 0 16px; }
.status > * { height: 19px; }
.status > .value { line-height: 19px; }
.status .rule { height: 14px; }
.status > .rule { margin: 0 9px 2px 14px; }
.pay { gap: 4px; }
.pay .tri { margin-left: 5px; }
.value { margin-left: 13px; }
.status > .views { margin-left: auto; height: 22px; display: flex; align-items: center; }
.views > button { height: 22px; padding: 3px 4px 0; }
.views > .rule { margin: 3px 10px 0; }
.views .view { margin-right: 2px; }
.views .on { background: #d9dde3; }
.views .pct { padding: 3px 0 0; gap: 5px; }
.views .minus { padding: 3px 12px 0; }
.zoom { appearance: none; width: 138px; height: 12px; margin: 3px 8px 0 0; background: linear-gradient(to right, #3d4a63 50%, #d5d8de 50%) center / 100% 1px no-repeat; }
.zoom::-webkit-slider-thumb { appearance: none; width: 12px; height: 12px; border: 1px solid #555b66; border-radius: 50%; background: #f0f0ee; }
.views .fullscreen { padding: 3px 0 0 9px; }

/* overlays */
.watermark { position: absolute; right: 7px; bottom: 7px; display: flex; opacity: .8; pointer-events: none; z-index: 2; }
.watermark div { display: flex; flex-direction: column; }
.watermark b { font: 700 21px/22px "Noto Sans CJK SC", sans-serif; color: #4d92d6; }
.watermark span { font: 700 17px/20px "Liberation Sans", sans-serif; color: #5cc274; }
.pointer { position: absolute; left: 0; top: 0; z-index: 3; }
```
